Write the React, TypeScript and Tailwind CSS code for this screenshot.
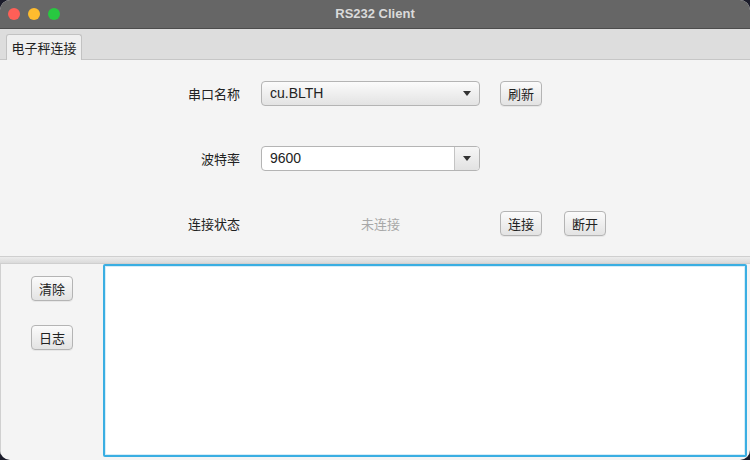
const font = { fontFamily: '"Noto Sans CJK SC", "Liberation Sans", sans-serif' };

function Btn({ label }: { label: string }) {
  return (
    <button
      type="button"
      className="flex h-[25px] w-[42px] items-center justify-center rounded-[4px] border border-[#b4b4b4] bg-gradient-to-b from-[#fbfbfb] to-[#e3e3e3] text-[13px] text-[#222] shadow-[0_1px_0_rgba(0,0,0,0.05)]"
    >
      {label}
    </button>
  );
}

function Arrow() {
  return <div className="h-0 w-0 border-x-[4.5px] border-t-[5px] border-x-transparent border-t-[#333]" />;
}

export default function App() {
  return (
    <div className="h-[460px] w-[750px] bg-[#1b1c2a]" style={font}>
      <div className="flex h-full w-full flex-col overflow-hidden rounded-[10px] bg-[#f4f4f4]">
        {/* title bar */}
        <div className="relative flex h-[29px] shrink-0 items-center justify-center border-b border-[#4c4c4c] bg-[#666666]">
          <div className="absolute left-[8px] top-[8px] flex gap-[8px]">
            <span className="h-[12px] w-[12px] rounded-full bg-[#fe5f57]" />
            <span className="h-[12px] w-[12px] rounded-full bg-[#febc2e]" />
            <span className="h-[12px] w-[12px] rounded-full bg-[#28c840]" />
          </div>
          <span className="text-[13px] font-bold text-[#dadada]" style={{ fontFamily: '"Liberation Sans", sans-serif' }}>
            RS232 Client
          </span>
        </div>

        {/* tab strip */}
        <div className="flex h-[31px] shrink-0 items-end border-b border-[#c6c6c6] bg-[#dddddd] pl-[6px]">
          <div className="-mb-px flex h-[26px] w-[76px] items-center justify-center rounded-t-[3px] border border-b-0 border-[#c2c2c2] bg-[#efefef] text-[13px] text-[#222]">
            电子秤连接
          </div>
        </div>

        {/* connection form */}
        <div className="flex h-[196px] shrink-0 flex-col gap-[40px] pt-[21px] text-[13px] text-[#222]">
          <div className="flex h-[25px] items-center">
            <div className="w-[241px] pr-[1px] text-right">串口名称</div>
            <div className="ml-[20px] flex h-[25px] w-[219px] items-center justify-between rounded-[4px] border border-[#b4b4b4] bg-gradient-to-b from-[#fbfbfb] to-[#e3e3e3] pl-[8px] pr-[8px]">
              <span className="text-[14px]" style={{ fontFamily: '"Liberation Sans", sans-serif' }}>cu.BLTH</span>
              <Arrow />
            </div>
            <div className="ml-[20px]">
              <Btn label="刷新" />
            </div>
          </div>

          <div className="flex h-[25px] items-center">
            <div className="w-[241px] pr-[1px] text-right">波特率</div>
            <div className="ml-[20px] flex h-[25px] w-[219px] overflow-hidden rounded-[4px] border border-[#b4b4b4] bg-white">
              <div className="flex flex-1 items-center pl-[8px] text-[14px]" style={{ fontFamily: '"Liberation Sans", sans-serif' }}>
                9600
              </div>
              <div className="flex w-[25px] items-center justify-center border-l border-[#c4c4c4] bg-gradient-to-b from-[#f6f6f6] to-[#e2e2e2]">
                <Arrow />
              </div>
            </div>
          </div>

          <div className="flex h-[25px] items-center">
            <div className="w-[241px] pr-[1px] text-right">连接状态</div>
            <div className="ml-[120px] w-[119px] text-[#a8a8a8]">未连接</div>
            <div className="ml-[20px] flex gap-[22px]">
              <Btn label="连接" />
              <Btn label="断开" />
            </div>
          </div>
        </div>

        {/* split divider */}
        <div className="h-[8px] shrink-0 border-y border-[#cfcfcf] bg-gradient-to-b from-[#ececec] to-[#dadada]" />

        {/* log area */}
        <div className="flex min-h-0 flex-1 pb-[3px] pr-[3px]">
          <div className="flex w-[103px] shrink-0 flex-col items-center gap-[24px] border-l border-[#d0d0d0] pt-[12px]">
            <Btn label="清除" />
            <Btn label="日志" />
          </div>
          <div className="flex-1 rounded-[2px] border-2 border-[#3aaee2] bg-white shadow-[inset_0_0_0_1px_#d6edf8]" />
        </div>
      </div>
    </div>
  );
}
